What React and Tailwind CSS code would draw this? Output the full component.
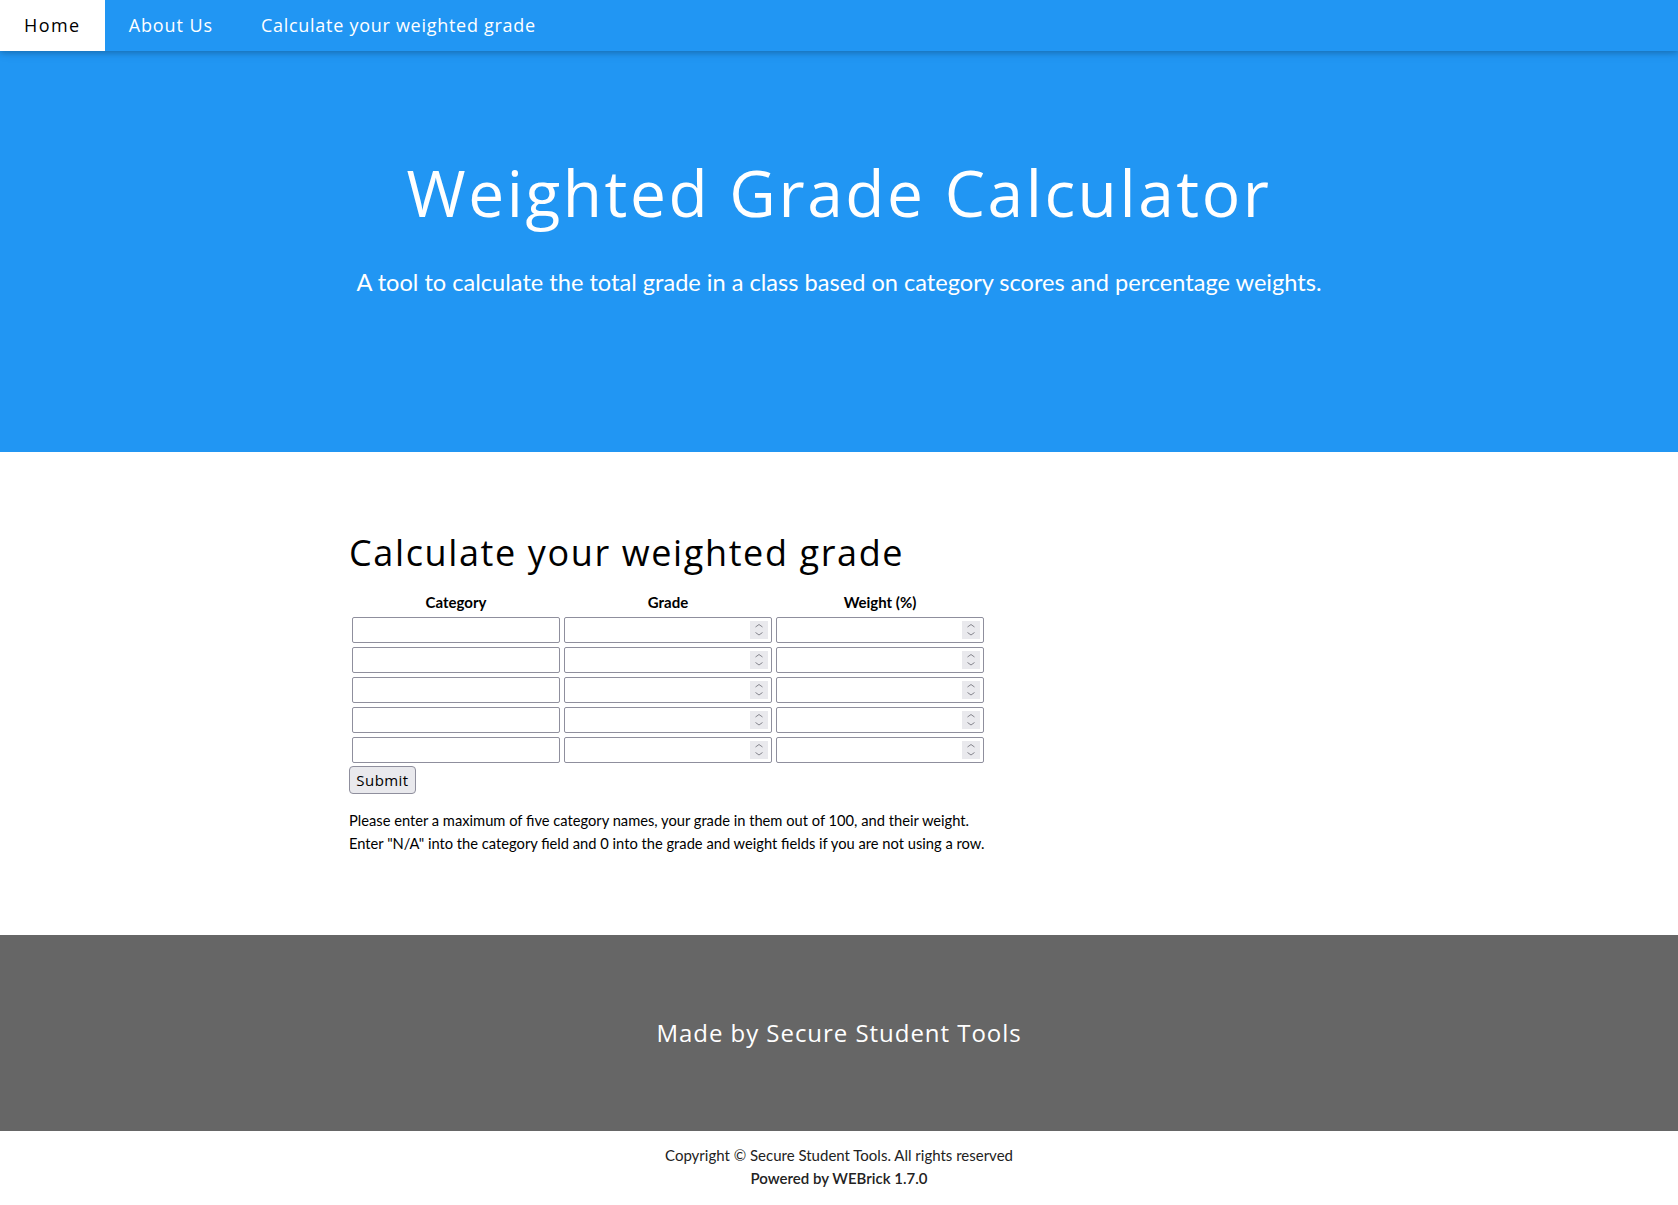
import React from "react";

const heading = { fontFamily: '"Open Sans", "Liberation Sans", sans-serif' };
const body = { fontFamily: 'Lato, "Liberation Sans", sans-serif' };

const Spinner = () => (
  <div className="w-[18px] h-[18px] bg-[#e9e9ed] mr-[3px] shrink-0 flex items-center justify-center">
    <svg width="18" height="18" viewBox="0 0 18 18" fill="none">
      <path d="M5.5 6 L9 3.5 L12.5 6" stroke="#85858d" strokeWidth="1" />
      <path d="M5.5 11.5 L9 14 L12.5 11.5" stroke="#85858d" strokeWidth="1" />
    </svg>
  </div>
);

const NumberField = ({ name }) => (
  <div className="flex items-center w-[208px] h-[26px] border border-[#8f8f9d] rounded-[2px] bg-white">
    <input
      type="text"
      name={name}
      className="flex-1 min-w-0 h-full px-1 outline-none bg-transparent text-[13px]"
    />
    <Spinner />
  </div>
);

const rows = [1, 2, 3, 4, 5];

export default function App() {
  return (
    <div className="bg-white text-black text-[15px] leading-[1.5]" style={body}>
      {/* top bar */}
      <nav
        className="relative z-10 flex bg-[#2196F3] text-white text-[18px] leading-[27px] shadow-[0_2px_5px_0_rgba(0,0,0,0.16),0_2px_10px_0_rgba(0,0,0,0.12)] tracking-[0.05em]"
        style={heading}
      >
        <a className="px-6 py-3 bg-white text-black tracking-[0.08em]" href="#">Home</a>
        <a className="px-6 py-3" href="#">About Us</a>
        <a className="px-6 py-3 tracking-[0.04em]" href="#">Calculate your weighted grade</a>
      </nav>

      <header className="bg-[#2196F3] text-white text-center pt-[94px] pb-[152px] px-4">
        <h1
          className="text-[64px] leading-[96px] font-normal tracking-[0.04em]"
          style={heading}
        >
          Weighted Grade Calculator
        </h1>
        <p className="mt-[23px] text-[23.6px] leading-[36px]" style={body}>
          A tool to calculate the total grade in a class based on category scores and percentage weights.
        </p>
      </header>

      <section className="pt-[74px] pb-[81px]">
        <div className="max-w-[980px] mx-auto">
          <h2 className="text-[36px] leading-[54px] font-normal tracking-[0.045em]" style={heading}>
            Calculate your weighted grade
          </h2>
          <form className="mt-[8px]">
            <table className="border-separate border-spacing-[2px]">
              <thead>
                <tr>
                  <th className="p-px font-bold leading-[22px]">Category</th>
                  <th className="p-px font-bold leading-[22px]">Grade</th>
                  <th className="p-px font-bold leading-[22px]">Weight (%)</th>
                </tr>
              </thead>
              <tbody>
                {rows.map((r) => (
                  <tr key={r}>
                    <td className="p-px">
                      <input
                        type="text"
                        name={"category" + r}
                        className="block w-[208px] h-[26px] border border-[#8f8f9d] rounded-[2px] px-1 text-[13px] outline-none"
                      />
                    </td>
                    <td className="p-px">
                      <NumberField name={"grade" + r} />
                    </td>
                    <td className="p-px">
                      <NumberField name={"weight" + r} />
                    </td>
                  </tr>
                ))}
              </tbody>
            </table>
            <button
              type="button"
              className="block h-[28px] w-[67px] bg-[#e9e9ed] border border-[#8f8f9d] rounded-[4px] text-[15px] leading-none tracking-[0.03em]"
              style={heading}
            >
              Submit
            </button>
          </form>
          <p className="mt-[15px] text-[14.7px] leading-[22.5px]">
            Please enter a maximum of five category names, your grade in them out of 100, and their weight.
            <br />
            Enter "N/A" into the category field and 0 into the grade and weight fields if you are not using a row.
          </p>
        </div>
      </section>

      <footer className="bg-[#666666] text-white text-center py-[80px]">
        <p className="text-[24px] leading-[36px] tracking-[0.04em]" style={heading}>
          Made by Secure Student Tools
        </p>
      </footer>

      <div className="text-center pt-[13px] pb-[16px] text-[15px] leading-[23px] text-[#222]">
        <p>Copyright © Secure Student Tools. All rights reserved</p>
        <p className="font-semibold">Powered by WEBrick 1.7.0</p>
      </div>
    </div>
  );
}
